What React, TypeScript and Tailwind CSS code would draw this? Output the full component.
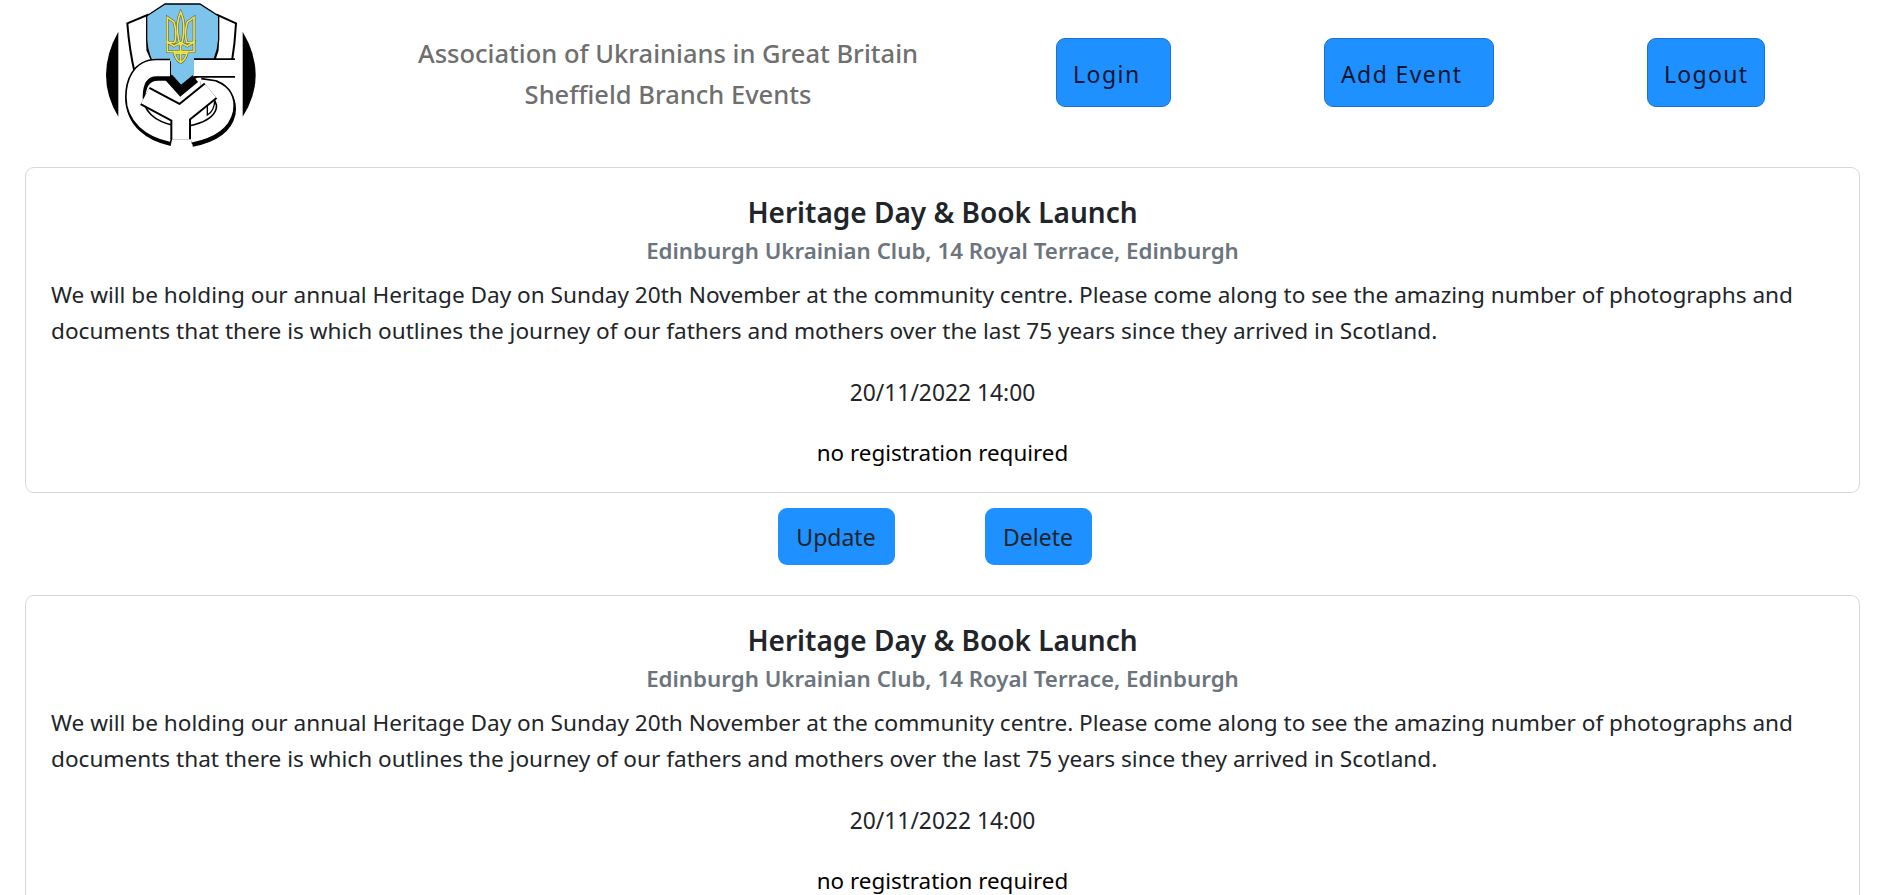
const tridentPaths = (
  <>
    <path d="M272 36 Q256 70 266 120 L272 138 L278 120 Q288 70 272 36 Z" />
    <path d="M232 52 L252 66 Q262 100 254 128 L232 126 Z" />
    <path d="M312 52 L292 66 Q282 100 290 128 L312 126 Z" />
    <path d="M232 155 V126 L252 138 L272 128 L292 138 L312 126 V155 Z" />
    <path d="M252 155 Q256 178 272 188 Q288 178 292 155 Z" />
    <path d="M272 140 V186 M254 160 H290" />
  </>
)

const cPath = "M240 205 H200 C150 205 134 250 134 292 C134 350 180 388 245 402"
const sBar = "M435 204 H312"
const sBowl = "M330 262 L370 268 Q412 285 405 330 C395 375 345 395 300 404"
const yPath = "M165 288 L272 345 L362 272 M272 345 V418"

const Logo = () => (
  <svg viewBox="0 0 540 450" className="w-[180px] h-[150px] shrink-0">
    <path d="M85 95 Q48 160 48 225 Q48 290 85 350 Z" fill="#000" />
    <path d="M458 95 Q497 160 497 225 Q497 290 458 350 Z" fill="#000" />
    <path d="M112 70 L172 45 L172 150 L190 190 L135 222 Q118 150 112 70 Z" fill="#fff" stroke="#000" strokeWidth="6" />
    <path d="M438 70 L383 45 L383 150 L370 190 L425 190 Q435 130 438 70 Z" fill="#fff" stroke="#000" strokeWidth="6" />
    <path d="M170 48 L225 12 H330 L386 48 V120 Q382 180 345 215 L272 262 L205 215 Q172 170 170 120 Z" fill="#7cc4ec" stroke="#000" strokeWidth="4" />
    <g fill="none" stroke="#5a5a30" strokeWidth="8">{tridentPaths}</g>
    <g fill="none" stroke="#f0e450" strokeWidth="5">{tridentPaths}</g>
    <path d="M236 232 L272 272 L316 236" fill="none" stroke="#000" strokeWidth="26" />

    {/* С */}
    <path d={cPath} transform="translate(3 8)" fill="none" stroke="#000" strokeWidth="58" />
    <path d={cPath} fill="none" stroke="#000" strokeWidth="58" />
    <path d={cPath} fill="none" stroke="#fff" strokeWidth="48" />
    {/* С reversed */}
    <path d={sBowl} transform="translate(3 8)" fill="none" stroke="#000" strokeWidth="58" />
    <path d={sBowl} fill="none" stroke="#000" strokeWidth="58" />
    <path d={sBowl} fill="none" stroke="#fff" strokeWidth="48" />
    <path d="M352 305 L374 300 Q374 332 352 345 Z" fill="#fff" stroke="#000" strokeWidth="4" />
    {/* У */}
    <path d={yPath} fill="none" stroke="#000" strokeWidth="62" />
    <path d={sBar} fill="none" stroke="#000" strokeWidth="58" />
    <path d={yPath} fill="none" stroke="#fff" strokeWidth="50" />
    <path d={sBar} fill="none" stroke="#fff" strokeWidth="48" />
  </svg>
)

const Card = () => (
  <>
    <div className="mx-[25px] w-[1835px] h-[326px] box-border border border-[#d8d8d8] rounded-[9px] bg-white pt-[25px] px-[25px] text-center">
      <h5 className="text-[28px] leading-[38px] font-semibold text-[#212529]">Heritage Day &amp; Book Launch</h5>
      <h6 className="text-[22.3px] leading-[34px] mt-[3px] font-semibold text-[#6c757d]">Edinburgh Ukrainian Club, 14 Royal Terrace, Edinburgh</h6>
      <p className="text-[22.6px] leading-[36px] mt-[9px] text-left text-[#212529]">
        We will be holding our annual Heritage Day on Sunday 20th November at the community centre. Please come along to see the amazing number of photographs and documents that there is which outlines the journey of our fathers and mothers over the last 75 years since they arrived in Scotland.
      </p>
      <p className="text-[22.8px] leading-[36px] mt-[26px] text-[#212529]">20/11/2022 14:00</p>
      <p className="text-[22.4px] leading-[36px] mt-[24px] text-black">no registration required</p>
    </div>
    <div className="flex justify-center gap-[90px] mt-[15px] mb-[30px] pr-[22px]">
      <button className="w-[117px] h-[57px] pt-[2px] rounded-[9px] bg-[#1e90ff] text-[23px] text-[#212529]">Update</button>
      <button className="w-[107px] h-[57px] pt-[2px] rounded-[9px] bg-[#1e90ff] text-[23px] text-[#212529]">Delete</button>
    </div>
  </>
)

export default function App() {
  return (
    <div className="h-screen overflow-hidden bg-white font-['Noto_Sans','Open_Sans',sans-serif]">
      <header className="flex items-start h-[167px]">
        <div className="ml-[90px]"><Logo /></div>
        <div className="ml-[53px] w-[690px] mt-[33px] text-center text-[25.5px] leading-[41px] font-medium text-[#6f6f6f]">
          <p>Association of Ukrainians in Great Britain</p>
          <p>Sheffield Branch Events</p>
        </div>
        <button className="ml-[43px] mt-[38px] w-[115px] h-[69px] pt-[4px] pl-[16px] text-left rounded-[9px] bg-[#1e90ff] border border-[#1a73d0] text-[23px] tracking-[1.5px] text-[#0b1530]">Login</button>
        <button className="ml-[153px] mt-[38px] w-[170px] h-[69px] pt-[4px] pl-[16px] text-left rounded-[9px] bg-[#1e90ff] border border-[#1a73d0] text-[23px] tracking-[1.4px] text-[#0b1530]">Add Event</button>
        <button className="ml-[153px] mt-[38px] w-[118px] h-[69px] pt-[4px] pl-[16px] text-left rounded-[9px] bg-[#1e90ff] border border-[#1a73d0] text-[23px] tracking-[1.3px] text-[#0b1530]">Logout</button>
      </header>
      <Card />
      <Card />
    </div>
  )
}
